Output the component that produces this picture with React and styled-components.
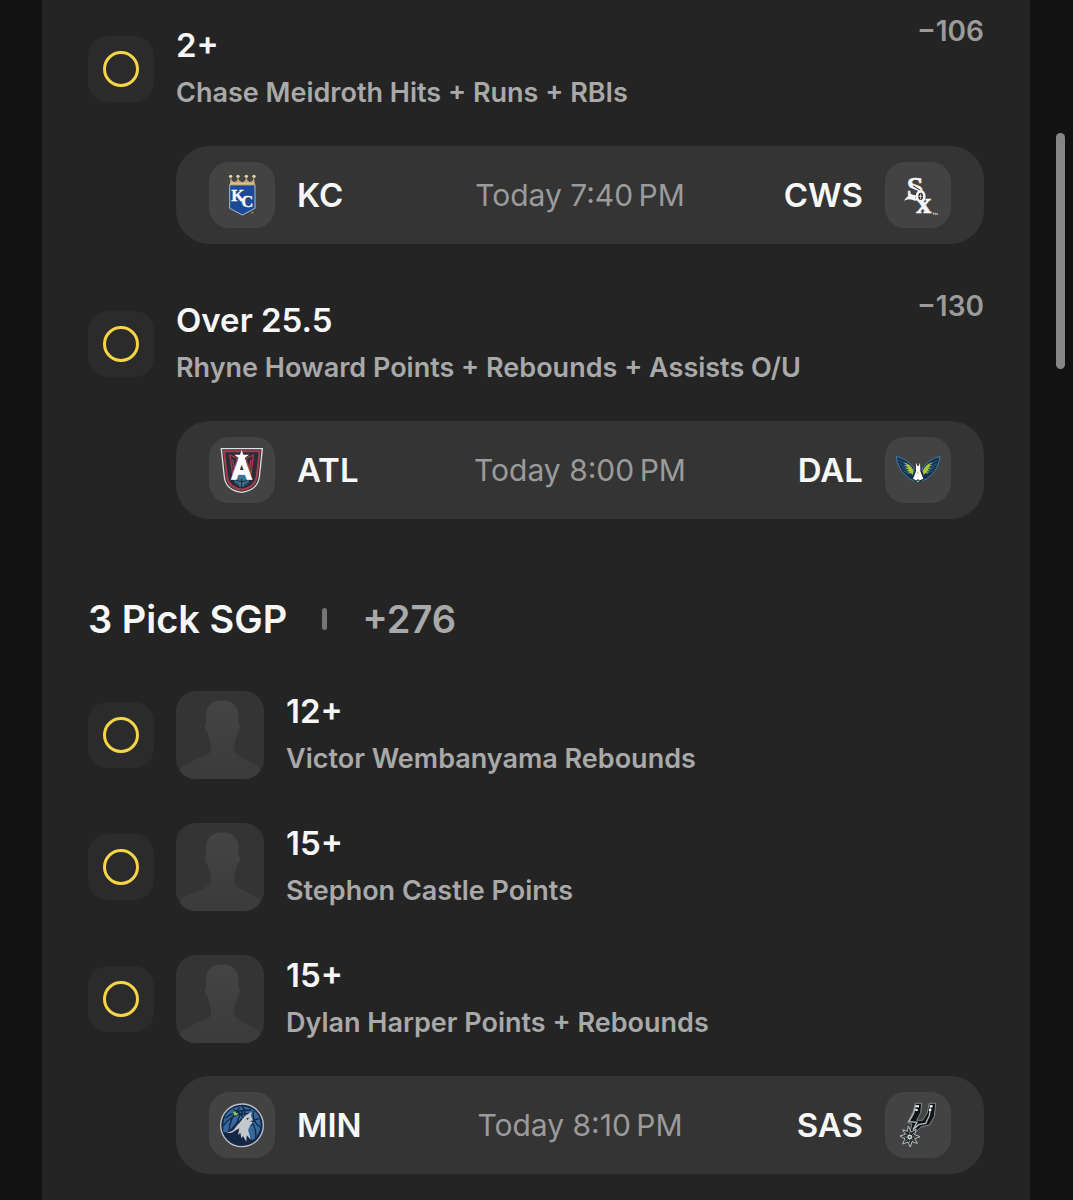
import React from "react";
import styled, { createGlobalStyle } from "styled-components";

const COLORS = {
  page: "#121212",
  panel: "#242424",
  card: "#343434",
  tile: "#434343",
  status: "#2b2b2b",
  accent: "#f5d547",
  text: "#f7f7f7",
  muted: "#a9a9a9",
  time: "#9b9b9b",
  divider: "#757575",
};

const GlobalStyle = createGlobalStyle`
  * {
    box-sizing: border-box;
  }

  body {
    margin: 0;
    background: ${COLORS.page};
    color: ${COLORS.text};
    font-family: Inter, Roboto, sans-serif;
  }

  p, h2, h3 {
    margin: 0;
  }
`;

const Panel = styled.main`
  min-height: 100vh;
  margin: 0 43px 0 42px;
  padding: 21px 46px 26px;
  background: ${COLORS.panel};
`;

const Scrollbar = styled.div`
  position: fixed;
  top: 133px;
  right: 8px;
  width: 9px;
  height: 236px;
  border-radius: 5px;
  background: #868686;
`;

const Leg = styled.section`
  margin-bottom: 52px;
`;

const PickRow = styled.div`
  display: flex;
  align-items: center;
  gap: 22px;

  & + & {
    margin-top: 36px;
  }
`;

const StatusTile = styled.div`
  display: flex;
  flex: none;
  align-items: center;
  justify-content: center;
  width: 66px;
  height: 66px;
  border-radius: 20px;
  background: ${COLORS.status};
`;

const StatusRing = styled.span`
  width: 36px;
  height: 36px;
  border: 3px solid ${COLORS.accent};
  border-radius: 50%;
`;

const Avatar = styled.svg`
  flex: none;
  width: 88px;
  height: 88px;
  border-radius: 20px;
  background: #343434;
`;

const PickText = styled.div`
  flex: 1;
  min-width: 0;
`;

const PickTitle = styled.h3`
  font-size: 33px;
  font-weight: 600;
  line-height: 48px;
`;

const PickMarket = styled.p`
  color: ${COLORS.muted};
  font-size: 27px;
  font-weight: 600;
  line-height: 48px;
`;

const Odds = styled.span`
  align-self: flex-start;
  color: ${COLORS.time};
  font-size: 28px;
  font-weight: 600;
  line-height: 20px;
`;

const GroupHeader = styled.header`
  display: flex;
  align-items: center;
  gap: 35px;
  margin: 76px 0 44px;
`;

const GroupTitle = styled.h2`
  color: ${(props) => (props.$muted ? COLORS.muted : COLORS.text)};
  font-size: 38px;
  font-weight: 600;
  line-height: 48px;
`;

const Divider = styled.span`
  width: 5px;
  height: 22px;
  border-radius: 3px;
  background: ${COLORS.divider};
`;

const MatchCard = styled.div`
  display: grid;
  grid-template-columns: 1fr auto 1fr;
  align-items: center;
  margin: 29px 0 0 88px;
  padding: 16px 33px;
  border-radius: 34px;
  background: ${COLORS.card};
`;

const Team = styled.div`
  display: flex;
  flex-direction: ${(props) => (props.$away ? "row-reverse" : "row")};
  align-items: center;
  gap: 22px;
  font-size: 33px;
  font-weight: 600;
`;

const TeamLogo = styled.svg`
  flex: none;
  width: 66px;
  height: 66px;
  border-radius: 20px;
  background: ${COLORS.tile};
`;

const MatchTime = styled.time`
  color: ${COLORS.time};
  font-size: 30px;
`;

const Royals = () => (
  <>
    <path d="M62 68H138V139L100 159L62 139Z" fill="#1b4a98" stroke="#aeb9c9" strokeWidth="3" />
    <path
      d="M62 70L65 46L70 57L77 60L84 56L87 45L91 56L100 61L108 56L112 45L116 56L123 60L130 57L135 46L138 70Z"
      fill="#c9aa76"
    />
    <path d="M64 65H136" stroke="#e6d3ad" strokeWidth="2" />
    {[65, 87, 112, 135].map((x) => (
      <circle key={x} cx={x} cy="43" r="5" fill="#e4d0aa" />
    ))}
    <text
      x="67 97"
      y="118 135"
      fill="#ffffff"
      stroke="#ffffff"
      strokeWidth="1"
      fontFamily="Liberation Serif, serif"
      fontSize="50"
    >
      KC
    </text>
    <path d="M126 151H134M130 151V156" stroke="#b5925c" strokeWidth="2" />
  </>
);

const WhiteSox = () => (
  <>
    <text
      x="65 94"
      y="104 154"
      fill="#f5f5f5"
      stroke="#f5f5f5"
      strokeWidth="2"
      fontFamily="Liberation Serif, serif"
      fontWeight="700"
      fontSize="90"
    >
      Sx
    </text>
    <path d="M57 116Q69 97 85 100L97 114Q91 119 83 114Q71 108 57 116Z" fill="#f5f5f5" />
    <path d="M84 71L111 88M91 96L102 111" stroke="#222" strokeWidth="3" />
    <ellipse cx="107" cy="103" rx="11" ry="15" fill="#222" stroke="#f5f5f5" strokeWidth="8" />
    <path d="M101 103H112M107 95V112" stroke="#ddd" strokeWidth="3" />
    <path d="M143 153H149M146 153V159M151 159V153L154 157L157 153V159" fill="none" stroke="#ddd" strokeWidth="2" />
  </>
);

const Dream = () => (
  <>
    <path
      d="M37 35H160L151 120Q145 160 98 166Q51 160 46 120Z"
      fill="#272d3a"
      stroke="#dfe1e1"
      strokeWidth="4"
    />
    <path
      d="M45 43H152L143 120Q137 153 98 158Q59 153 54 120Z"
      fill="none"
      stroke="#a83c48"
      strokeWidth="6"
    />
    <path
      d="M63 54L71 112L86 64ZM133 54L126 112L111 64ZM71 68L76 98M126 68L121 98"
      fill="none"
      stroke="#a83c48"
      strokeWidth="4"
    />
    <circle cx="98" cy="128" r="22" fill="#397295" />
    <path d="M80 139Q89 137 88 151M116 139Q107 137 108 151M98 126V152M76 126Q98 142 120 126" fill="none" stroke="#202835" strokeWidth="3" />
    <text
      x="98"
      y="125"
      textAnchor="middle"
      fontFamily="Liberation Sans, sans-serif"
      fontWeight="700"
      fontSize="88"
      fill="#ffffff"
      stroke="#ffffff"
      strokeWidth="4"
    >
      A
    </text>
    <path d="M98 39L103 53L120 53L107 63L112 79L98 70L84 79L89 63L76 53L93 53Z" fill="#ffffff" />
  </>
);

const Wing = () => (
  <>
    <path d="M34 58Q68 67 86 92L94 133Q72 129 62 115Q48 103 43 90Q36 76 34 58Z" fill="#142f50" stroke="#3f7fa2" strokeWidth="3" />
    <path
      d="M42 69L65 85M44 80L67 95M50 91L70 103M56 102L73 109"
      fill="none"
      stroke="#36779d"
      strokeWidth="2"
    />
    <path
      d="M54 75Q79 81 86 103L83 114L76 107L70 111L73 103L65 103L71 97L60 94L69 91L57 85L66 84Z"
      fill="#a9c43c"
    />
  </>
);

const Wings = () => (
  <>
    <Wing />
    <g transform="translate(199 0) scale(-1 1)">
      <Wing />
    </g>
    <path d="M89 103L99 87L110 103L116 127L99 140L83 127Z" fill="#132338" />
    <path
      d="M93 77L97 87H101L105 77L106 103L115 125L105 130L99 127L93 130L84 125L93 103Z"
      fill="#ffffff"
    />
    <path d="M92 129L99 132L106 129L99 138Z" fill="#9ecb65" />
    <path d="M99 104V111" stroke="#d8b74a" strokeWidth="3" />
  </>
);

const Wolves = () => (
  <>
    <circle cx="99" cy="100" r="64" fill="#142745" stroke="#b9c0c7" strokeWidth="4" />
    <path d="M43 102Q43 48 99 43Q155 49 155 102Q151 131 130 145L115 120L43 121Z" fill="#37689c" />
    <path
      d="M99 42Q111 54 107 74M73 52Q96 62 107 83M48 79Q77 54 126 54M43 101Q70 61 119 65M59 126Q61 75 92 47M80 121Q80 82 102 58M133 57Q129 91 155 106M151 80Q131 82 125 102M140 137Q143 112 129 91"
      fill="none"
      stroke="#142745"
      strokeWidth="4"
    />
    <path d="M47 124L64 113L78 97L99 78L111 92L96 149L70 151Z" fill="#142745" />
    <path
      d="M51 121Q68 121 76 111Q83 100 93 91L108 72L128 59L126 72L131 84L122 89L132 91L123 101L117 114L126 144L113 130L112 149L102 132L97 139L94 122L87 129L91 109L76 117Q68 127 51 121Z"
      fill="#c2c8cc"
    />
    <path d="M112 79L120 77L116 84Z" fill="#142745" />
    <path d="M74 61L79 58L81 63L88 63L84 67L87 71L80 69L75 72L76 66L70 63Z" fill="#92d34c" />
  </>
);

const Spurs = () => (
  <>
    <path
      d="M92 34H110L107 62L95 85H113L127 62L133 34H152L148 73L133 99L109 104L84 128L75 121L81 96L68 91L84 61Z"
      fill="#101315"
      stroke="#aeb5b5"
      strokeWidth="2"
      strokeLinejoin="round"
    />
    <path d="M92 39L86 64L72 89L96 91L84 113L101 98L122 94L133 71L138 39" fill="none" stroke="#b4bcbd" strokeWidth="4" />
    <path d="M93 43H102M91 54H98M134 43H143M132 54H139" stroke="#ffffff" strokeWidth="6" />
    <path
      d="M70 102L78 120L94 112L88 128L105 134L89 140L97 154L81 149L76 165L69 150L53 156L60 140L45 132L61 127L53 113L67 118Z"
      fill="#222728"
      stroke="#b9bfbf"
      strokeWidth="3"
    />
    <path d="M74 118V153M57 135H92M62 123L87 148M87 123L62 148" stroke="#8f999a" strokeWidth="2" />
    <circle cx="74" cy="135" r="7" fill="#dce0e0" />
    <circle cx="74" cy="135" r="3" fill="#35454b" />
  </>
);

const Status = () => (
  <StatusTile>
    <StatusRing />
  </StatusTile>
);

const PlayerAvatar = () => (
  <Avatar viewBox="0 0 264 264" aria-hidden="true">
    <defs>
      <linearGradient id="player" x1="0" y1="0" x2="0" y2="1">
        <stop offset="0" stopColor="#444444" />
        <stop offset="1" stopColor="#3b3b3b" />
      </linearGradient>
    </defs>
    <path
      d="M139 28C108 28 90 46 90 78L90 99C84 102 87 120 94 123C96 138 103 145 105 158V180C99 196 46 207 16 230L0 264H264L248 228C218 208 181 196 175 180V158C177 145 183 138 185 123C192 119 195 102 188 99L188 78C188 46 168 28 139 28Z"
      fill="url(#player)"
    />
  </Avatar>
);

const Pick = ({ title, market, odds, avatar }) => (
  <PickRow>
    <Status />
    {avatar && <PlayerAvatar />}
    <PickText>
      <PickTitle>{title}</PickTitle>
      <PickMarket>{market}</PickMarket>
    </PickText>
    {odds && <Odds>{odds}</Odds>}
  </PickRow>
);

const Match = ({ home, away, time, homeLogo, awayLogo }) => (
  <MatchCard>
    <Team>
      <TeamLogo viewBox="0 0 198 198" aria-hidden="true">{homeLogo}</TeamLogo>
      <span>{home}</span>
    </Team>
    <MatchTime>{time}</MatchTime>
    <Team $away>
      <TeamLogo viewBox="0 0 198 198" aria-hidden="true">{awayLogo}</TeamLogo>
      <span>{away}</span>
    </Team>
  </MatchCard>
);

const sgpPicks = [
  { title: "12+", market: "Victor Wembanyama Rebounds" },
  { title: "15+", market: "Stephon Castle Points" },
  { title: "15+", market: "Dylan Harper Points + Rebounds" },
];

const App = () => {
  return (
    <>
      <GlobalStyle />
      <Panel>
        <Leg>
          <Pick title="2+" market="Chase Meidroth Hits + Runs + RBIs" odds="−106" />
          <Match
            home="KC"
            away="CWS"
            time={"Today 7:40\u202fPM"}
            homeLogo={<Royals />}
            awayLogo={<WhiteSox />}
          />
        </Leg>

        <Leg>
          <Pick
            title="Over 25.5"
            market="Rhyne Howard Points + Rebounds + Assists O/U"
            odds="−130"
          />
          <Match
            home="ATL"
            away="DAL"
            time={"Today 8:00\u202fPM"}
            homeLogo={<Dream />}
            awayLogo={<Wings />}
          />
        </Leg>

        <section>
          <GroupHeader>
            <GroupTitle>3 Pick SGP</GroupTitle>
            <Divider />
            <GroupTitle as="span" $muted>+276</GroupTitle>
          </GroupHeader>
          {sgpPicks.map((pick) => (
            <Pick key={pick.market} title={pick.title} market={pick.market} avatar />
          ))}
          <Match
            home="MIN"
            away="SAS"
            time={"Today 8:10\u202fPM"}
            homeLogo={<Wolves />}
            awayLogo={<Spurs />}
          />
        </section>
      </Panel>
      <Scrollbar />
    </>
  );
};

export default App;
